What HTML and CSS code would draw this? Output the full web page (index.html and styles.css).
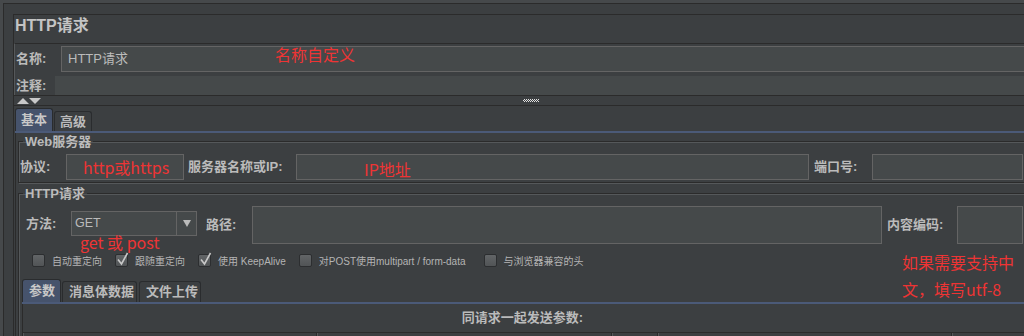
FILE: index.html
```html
<!DOCTYPE html>
<html lang="zh-CN">
<head>
<meta charset="utf-8">
<title>HTTP请求</title>
<link rel="stylesheet" href="styles.css">
</head>
<body>
<div class="outer">
  <div class="panel">
    <div class="title">HTTP请求</div>
    <div class="names">
      <div class="row name-row">
        <span class="lbl lbl-name">名称:</span>
        <div class="field field-name">HTTP请求</div>
      </div>
      <div class="row comment-row">
        <span class="lbl lbl-comment">注释:</span>
        <div class="field field-comment"></div>
      </div>
    </div>
    <div class="splitter">
      <svg class="split-arrows" width="24" height="6" viewBox="0 0 24 6"><path d="M0 6 L6 0 L12 6 Z"/><path d="M12 0 L24 0 L18 6 Z"/></svg>
      <svg class="split-grip" width="16" height="3" viewBox="0 0 16 3"><defs><pattern id="chk" width="2" height="2" patternUnits="userSpaceOnUse"><rect x="1" y="0" width="1" height="1" fill="#e0e0e0"/><rect x="0" y="1" width="1" height="1" fill="#e0e0e0"/></pattern></defs><rect width="16" height="3" fill="url(#chk)"/></svg>
    </div>
    <div class="tabpane">
      <div class="tabs">
        <div class="tab active">基本</div>
        <div class="tab">高级</div>
      </div>
      <div class="tabline"></div>
      <div class="tabbody">
        <fieldset class="group web">
          <legend>Web服务器</legend>
          <div class="row web-row">
            <span class="lbl lbl-proto">协议:</span>
            <div class="field f-proto"></div>
            <span class="lbl lbl-host">服务器名称或IP:</span>
            <div class="field f-host"></div>
            <span class="lbl lbl-port">端口号:</span>
            <div class="field f-port"></div>
          </div>
        </fieldset>
        <fieldset class="group req">
          <legend>HTTP请求</legend>
          <div class="row req-row">
            <span class="lbl lbl-method">方法:</span>
            <div class="combo">
              <span class="combo-text">GET</span>
              <span class="combo-btn"><svg width="8" height="7" viewBox="0 0 8 7"><path d="M0 0 L8 0 L4 7 Z"/></svg></span>
            </div>
            <span class="lbl lbl-path">路径:</span>
            <div class="field f-path"></div>
            <span class="lbl lbl-enc">内容编码:</span>
            <div class="field f-enc"></div>
          </div>
          <div class="checks">
            <div class="check"><span class="box"></span><span class="ck-label">自动重定向</span></div>
            <div class="check"><span class="box"><svg class="tick" width="14" height="14" viewBox="0 0 14 14"><path d="M3 6.5 L6.5 11 L12.5 0"/></svg></span><span class="ck-label">跟随重定向</span></div>
            <div class="check"><span class="box"><svg class="tick" width="14" height="14" viewBox="0 0 14 14"><path d="M3 6.5 L6.5 11 L12.5 0"/></svg></span><span class="ck-label">使用 KeepAlive</span></div>
            <div class="check ck-wide"><span class="box"></span><span class="ck-label">对POST使用multipart / form-data</span></div>
            <div class="check"><span class="box"></span><span class="ck-label">与浏览器兼容的头</span></div>
          </div>
          <div class="subtabs">
            <div class="tab active sub-a">参数</div>
            <div class="tab sub-b">消息体数据</div>
            <div class="tab sub-c">文件上传</div>
          </div>
          <div class="subline"></div>
          <div class="subpanel">
            <div class="subpanel-title">同请求一起发送参数:</div>
            <div class="thead"><span class="th th1"></span><span class="th th2"></span><span class="th th3"></span><span class="th th4"></span><span class="th th5"></span></div>
          </div>
        </fieldset>
      </div>
    </div>
  </div>
</div>
<div class="note note-name">名称自定义</div>
<div class="note note-proto">http或https</div>
<div class="note note-ip">IP地址</div>
<div class="note note-method">get 或 post</div>
<div class="note note-enc">如果需要支持中<br>文，填写utf-8</div>
</body>
</html>
```
FILE: styles.css
```css
* { box-sizing: border-box; }
html, body { margin: 0; padding: 0; }
body {
  width: 1024px;
  height: 336px;
  overflow: hidden;
  position: relative;
  background: #46494b;
  color: #bbbbbb;
  font-family: "Liberation Sans", "Noto Sans CJK SC", sans-serif;
  font-size: 13px;
}
.outer {
  margin: 3px 0 0 3px;
  width: 1021px;
  height: 333px;
  overflow: hidden;
  border-top: 1px solid #2b2b2b;
  border-left: 1px solid #2b2b2b;
  background: #3c3f41;
  padding: 10px 0 0 9px;
}
.panel {
  width: 1035px;
  height: 100%;
  border-top: 1px solid #2b2b2b;
  border-left: 1px solid #2b2b2b;
}
.title {
  height: 28px;
  line-height: 22px;
  font-size: 16px;
  font-weight: bold;
  padding-left: 1px;
  color: #c4c4c4;
}
.names {
  border-top: 1px solid #2b2b2b;
  border-left: 1px solid #55585a;
}
.row { display: flex; align-items: center; }
.lbl { font-weight: bold; white-space: nowrap; flex: none; line-height: 16px; }
.field { background: #45494a; border: 1px solid #646464; flex: none; }
.name-row { margin-top: 2px; height: 26px; }
.lbl-name { width: 46px; padding-left: 1px; }
.field-name { flex: 1; height: 26px; line-height: 24px; padding-left: 6px; }
.comment-row { margin-top: 4px; height: 19px; }
.lbl-comment { width: 40px; padding-left: 1px; }
.field-comment { flex: 1; height: 19px; border: none; }

.splitter {
  height: 11px;
  border-top: 1px solid #2b2b2b;
  border-bottom: 1px solid #2b2b2b;
  display: grid;
  align-items: center;
}
.split-arrows { grid-area: 1 / 1; justify-self: start; margin-left: 3px; fill: #c8c8c8; }
.split-grip { grid-area: 1 / 1; justify-self: center; }

.tabs, .subtabs { display: flex; align-items: flex-end; gap: 1px; }
.tabs { height: 25px; padding-left: 1px; }
.tab {
  height: 20px;
  padding: 0 6px;
  border: 1px solid #2a2c2e;
  border-bottom: none;
  border-radius: 3px 3px 0 0;
  background: #3c3f41;
  font-weight: bold;
  line-height: 19px;
  text-align: center;
  white-space: nowrap;
}
.tab.active { height: 23px; background: #46536c; line-height: 21px; color: #c8c8c8; }
.tabs .tab { width: 38px; padding: 0; }
.tabline, .subline { height: 2px; background: #4b5a78; }
.tabline { margin-left: 1px; }
.tabbody {
  margin-left: 1px;
  border-left: 1px solid #2b2b2b;
  padding-top: 1px;
}
fieldset.group {
  margin: 0 0 0 2px;
  padding: 5px 0 2px 0;
  border: 1px solid #2b2b2b;
  box-shadow: inset 1px 1px 0 #55585a, 1px 1px 0 #55585a;
  min-width: 0;
}
fieldset.req { margin-top: 3px; padding-bottom: 0; }
legend {
  margin-left: 4px;
  padding: 0 2px;
  height: 15px;
  line-height: 15px;
  font-weight: bold;
  font-size: 13px;
}
.web-row { height: 26px; }
.web-row .field { height: 26px; }
.lbl-proto { width: 47px; padding-left: 1px; }
.f-proto { width: 118px; }
.lbl-host { width: 112px; padding-left: 4px; }
.f-host { width: 513px; }
.lbl-port { width: 63px; padding-left: 5px; }
.f-port { width: 151px; }

.req-row { height: 38px; }
.lbl-method { width: 52px; padding-left: 7px; align-self: flex-start; margin-top: 10px; }
.combo {
  flex: none;
  align-self: flex-start;
  margin-top: 5px;
  width: 126px;
  height: 25px;
  display: flex;
  background: #45494a;
  border: 1px solid #646464;
}
.combo-text { flex: 1; padding-left: 3px; line-height: 22px; font-size: 12.5px; }
.combo-btn {
  width: 20px;
  border-left: 1px solid #646464;
  display: flex;
  align-items: center;
  justify-content: center;
  fill: #bbbbbb;
  padding-left: 1px;
}
.lbl-path { width: 55px; padding-left: 9px; }
.f-path { width: 630px; height: 38px; }
.lbl-enc { width: 75px; padding-left: 5px; }
.f-enc { width: 66px; height: 38px; }

.checks {
  display: flex;
  align-items: center;
  height: 13px;
  margin-top: 10px;
  padding-left: 13px;
  font-size: 10px;
}
.check { display: flex; align-items: center; margin-right: 13px; }
.ck-wide { margin-right: 18px; }
.box {
  width: 13px;
  height: 13px;
  margin-right: 7px;
  border: 1px solid #2c2e30;
  border-radius: 2px;
  background: linear-gradient(#626567, #515456);
  position: relative;
}
.tick {
  position: absolute;
  left: -1px;
  top: -2px;
  fill: none;
  stroke: #c8c8c8;
  stroke-width: 1.6;
  overflow: visible;
}
.ck-label { white-space: nowrap; color: #b4b4b4; }

.subtabs { height: 23px; margin-top: 12px; margin-left: 3px; }
.subtabs .tab { height: 21px; line-height: 19px; }
.subtabs .tab.active { height: 23px; line-height: 21px; }
.sub-a { width: 39px; }
.sub-b { width: 75px; }
.sub-c { width: 62px; margin-left: 1px; }
.subline { margin-left: 3px; }
.subpanel {
  margin-left: 3px;
  border-left: 1px solid #2b2b2b;
}
.subpanel-title {
  height: 28px;
  line-height: 28px;
  text-align: center;
  font-weight: bold;
  padding-right: 25px;
}
.thead {
  display: grid;
  grid-template-columns: 294px 295px 46px 294px 1fr;
  height: 20px;
  border-top: 1px solid #2b2b2b;
}
.th { border-right: 1px solid #2b2b2b; border-left: 1px solid #55585a; }

.note {
  position: absolute;
  color: #ee3434;
  font-family: "Noto Sans CJK SC", sans-serif;
  font-size: 16px;
  line-height: 16px;
  white-space: nowrap;
}
.note-name { left: 275px; top: 46px; }
.note-proto { left: 83px; top: 159px; }
.note-ip { left: 364px; top: 161px; }
.note-method { left: 80px; top: 234px; }
.note-enc { left: 902px; top: 249px; line-height: 27px; }
```
